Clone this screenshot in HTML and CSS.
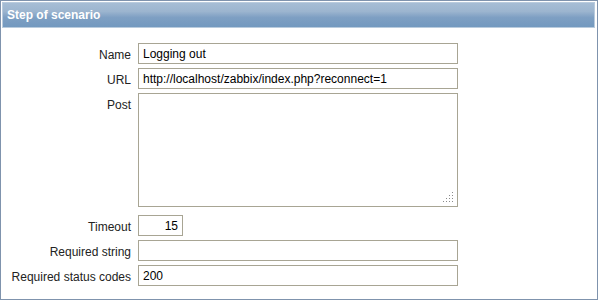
FILE: index.html
```html
<!DOCTYPE html>
<html lang="en">
<head>
    <meta charset="UTF-8">
    <meta name="viewport" content="width=device-width, initial-scale=1.0">
    <title>Step of scenario</title>
    <link rel="stylesheet" href="styles.css">
</head>
<body>
    <div class="form-window">
        <div class="form-header">Step of scenario</div>
        <form class="form-grid">
            <label class="form-label" for="stepName">Name</label>
            <div class="form-field"><input type="text" id="stepName" class="text-input" value="Logging out"></div>

            <label class="form-label" for="stepUrl">URL</label>
            <div class="form-field"><input type="text" id="stepUrl" class="text-input" value="http://localhost/zabbix/index.php?reconnect=1"></div>

            <label class="form-label" for="stepPost">Post</label>
            <div class="form-field area-field">
                <textarea id="stepPost" class="text-area"></textarea>
                <!-- poignée de redimensionnement -->
                <svg class="grip" width="12" height="12" viewBox="0 0 12 12">
                    <g fill="#8a8a8a">
                        <rect x="9" y="0" width="1" height="1"/>
                        <rect x="9" y="3" width="1" height="1"/>
                        <rect x="6" y="3" width="1" height="1"/>
                        <rect x="9" y="6" width="1" height="1"/>
                        <rect x="6" y="6" width="1" height="1"/>
                        <rect x="3" y="6" width="1" height="1"/>
                        <rect x="9" y="9" width="1" height="1"/>
                        <rect x="6" y="9" width="1" height="1"/>
                        <rect x="3" y="9" width="1" height="1"/>
                        <rect x="0" y="9" width="1" height="1"/>
                    </g>
                </svg>
            </div>

            <label class="form-label" for="stepTimeout">Timeout</label>
            <div class="form-field"><input type="text" id="stepTimeout" class="text-input short-input" value="15"></div>

            <label class="form-label" for="stepRequired">Required string</label>
            <div class="form-field"><input type="text" id="stepRequired" class="text-input" value=""></div>

            <label class="form-label" for="stepStatus">Required status codes</label>
            <div class="form-field"><input type="text" id="stepStatus" class="text-input" value="200"></div>
        </form>
    </div>
</body>
</html>
```

FILE: styles.css
```css
/* Styles généraux */
body {
    margin: 0;
    padding: 0;
    font-family: 'Liberation Sans', Arial, sans-serif;
    font-size: 12px;
    color: #222;
    background: #fff;
}

.form-window {
    width: 598px;
    height: 300px;
    box-sizing: border-box;
    border: 1px solid #7f93ad;
    padding: 1px 2px 0 1px;
}

/* Bandeau du haut */
.form-header {
    height: 26px;
    box-sizing: border-box;
    border: 1px solid #b9cbdd;
    background: linear-gradient(to bottom, #a6bdd5 0%, #9cb5cf 35%, #7e9fc3 60%, #7399bf 100%);
    color: #fff;
    font-weight: bold;
    font-size: 12px;
    line-height: 24px;
    padding-left: 4px;
}

/* Formulaire */
.form-grid {
    display: grid;
    grid-template-columns: 129px 320px;
    column-gap: 7px;
    row-gap: 4px;
    padding-top: 15px;
    margin: 0;
}

.form-label {
    text-align: right;
    padding-top: 5px;
    line-height: 14px;
}

.form-field {
    display: flex;
}

.area-field {
    position: relative;
    width: 320px;
}

.text-input,
.text-area {
    width: 320px;
    height: 21px;
    box-sizing: border-box;
    border: 1px solid #a8a594;
    padding: 0 4px;
    margin: 0;
    font-family: 'Liberation Sans', Arial, sans-serif;
    font-size: 12px;
    color: #000;
    background: #fff;
    outline: none;
}

.text-area {
    height: 114px;
    margin-bottom: 4px;
    resize: none;
}

.grip {
    position: absolute;
    right: 3px;
    bottom: 7px;
}

.short-input {
    width: 45px;
    text-align: right;
}
```
